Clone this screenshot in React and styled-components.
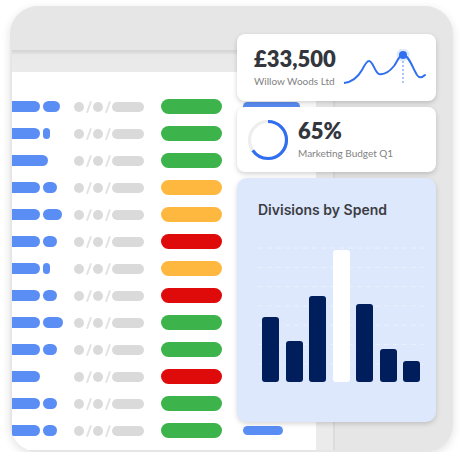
import React from "react";
import styled, { createGlobalStyle } from "styled-components";

const GlobalStyle = createGlobalStyle`
  html, body { margin: 0; padding: 0; background: #ffffff; }
  body { font-family: Lato, "Open Sans", sans-serif; }
`;

const rows = [
  { lead: 38, name: 17, status: "green" },
  { lead: 38, name: 7, status: "green" },
  { lead: 46, name: 0, status: "green" },
  { lead: 38, name: 14, status: "orange" },
  { lead: 38, name: 19, status: "orange" },
  { lead: 38, name: 14, status: "red" },
  { lead: 38, name: 7, status: "orange" },
  { lead: 38, name: 14, status: "red" },
  { lead: 38, name: 20, status: "green" },
  { lead: 38, name: 14, status: "green" },
  { lead: 38, name: 0, status: "red" },
  { lead: 38, name: 14, status: "green" },
  { lead: 38, name: 14, status: "green", tail: 40 },
];

const statusColors = {
  green: "#3cb44b",
  orange: "#ffb83f",
  red: "#df0a0a",
};

const bars = [65, 41, 86, 132, 78, 33, 21];

export default function App() {
  return (
    <>
      <GlobalStyle />
      <Frame>
        <Window>
          <WindowHeader />
          <WindowBody>
            <Table>
              {rows.map((r, i) => (
                <Row key={i}>
                  <NameCell>
                    <LeadBar style={{ width: r.lead }} />
                    {r.name > 0 && <NameBar style={{ width: r.name }} />}
                  </NameCell>
                  <DateCell>
                    <Dot />
                    <Slash />
                    <Dot />
                    <Slash />
                    <Year />
                  </DateCell>
                  <StatusCell>
                    <Status $color={statusColors[r.status]} />
                  </StatusCell>
                  <TailBar style={{ width: r.tail || 57 }} />
                </Row>
              ))}
            </Table>
            <Scroller />
          </WindowBody>
        </Window>

        <Cards>
          <Card>
            <CardText>
              <Amount>£33,500</Amount>
              <Label>Willow Woods Ltd</Label>
            </CardText>
            <Spark width="84" height="40" viewBox="0 0 84 40">
              <path
                d="M0 34 C8 33 14 28 18 21 C21 15 23 12 25 12 C29 12 31 24 35 25 C41 26 46 22 50 17 C53 13 55 6 59 6 C65 6 69 20 73 26 C76 30 78 28 81 26"
                fill="none"
                stroke="#2f6ff0"
                strokeWidth="2"
                strokeLinecap="round"
              />
              <line x1="59" y1="8" x2="59" y2="36" stroke="#5b8ef5" strokeWidth="1" strokeDasharray="2 2" />
              <circle cx="59" cy="6" r="6.5" fill="#2f6ff0" opacity="0.15" />
              <circle cx="59" cy="6" r="4" fill="#2f6ff0" />
            </Spark>
          </Card>

          <Card>
            <Ring width="42" height="42" viewBox="0 0 42 42">
              <circle cx="21" cy="21" r="18.5" fill="none" stroke="#eeeeee" strokeWidth="3.2" />
              <circle
                cx="21"
                cy="21"
                r="18.5"
                fill="none"
                stroke="#2f6ff0"
                strokeWidth="3.2"
                strokeDasharray={`${0.65 * 2 * Math.PI * 18.5} 200`}
                transform="rotate(-90 21 21)"
              />
            </Ring>
            <CardText>
              <Amount>65%</Amount>
              <Label>Marketing Budget Q1</Label>
            </CardText>
          </Card>

          <ChartCard>
            <ChartTitle>Divisions by Spend</ChartTitle>
            <Chart>
              <GridLines width="166" height="140" viewBox="0 0 166 140">
                {[0, 1, 2, 3, 4, 5, 6].map((i) => (
                  <line
                    key={i}
                    x1="0"
                    x2="166"
                    y1={4 + i * 19.3}
                    y2={4 + i * 19.3}
                    stroke="#e9f0fd"
                    strokeWidth="1"
                    strokeDasharray="5 4"
                  />
                ))}
              </GridLines>
              {bars.map((h, i) => (
                <Bar key={i} $light={i === 3} style={{ height: h }} />
              ))}
            </Chart>
          </ChartCard>
        </Cards>
      </Frame>
    </>
  );
}

const Frame = styled.div`
  position: relative;
  margin: 6px 0 0 10px;
  width: 443px;
  height: 446px;
  border-radius: 28px;
  background: #e6e6e6;
  overflow: hidden;
  box-shadow: 0 3px 10px rgba(0, 0, 0, 0.12);
`;

const Window = styled.div`
  margin: 44px 0 0 2px;
  width: 323px;
  display: flex;
  flex-direction: column;
`;

const WindowHeader = styled.div`
  height: 22px;
  background: linear-gradient(#d3d3d3 0, #dedede 3px, #e9e9e9 5px, #ebebeb 100%);
`;

const WindowBody = styled.div`
  display: flex;
  height: 378px;
`;

const Table = styled.div`
  flex: 1;
  background: #ffffff;
  overflow: hidden;
  padding-top: 21px;
`;

const Scroller = styled.div`
  width: 17px;
  background: #ebebeb;
  border-right: 2px solid #dcdcdc;
`;

const Row = styled.div`
  height: 27px;
  display: grid;
  grid-template-columns: 62px 87px 82px 1fr;
  align-items: center;
`;

const NameCell = styled.div`
  display: flex;
  align-items: center;
  gap: 3px;
  margin-left: -10px;
`;

const LeadBar = styled.div`
  height: 11px;
  border-radius: 6px;
  background: #5b8ef5;
`;

const NameBar = styled(LeadBar)``;

const DateCell = styled.div`
  display: flex;
  align-items: center;
`;

const Dot = styled.div`
  width: 10px;
  height: 10px;
  border-radius: 50%;
  background: #dadada;
`;

const Slash = styled.div`
  width: 9px;
  height: 12px;
  position: relative;
  &::after {
    content: "";
    position: absolute;
    left: 4px;
    top: 0;
    width: 1.5px;
    height: 12px;
    background: #e2e2e2;
    transform: rotate(20deg);
  }
`;

const Year = styled.div`
  width: 32px;
  height: 10px;
  border-radius: 5px;
  background: #dadada;
`;

const StatusCell = styled.div`
  display: flex;
  align-items: center;
`;

const Status = styled.div`
  width: 61px;
  height: 15px;
  border-radius: 8px;
  background: ${(p) => p.$color};
`;

const TailBar = styled.div`
  height: 9px;
  border-radius: 5px;
  background: #5b8ef5;
`;

const Cards = styled.div`
  position: absolute;
  left: 227px;
  top: 28px;
  width: 199px;
  display: flex;
  flex-direction: column;
  gap: 6px;
`;

const Card = styled.div`
  height: 67px;
  box-sizing: border-box;
  background: #ffffff;
  border-radius: 8px;
  box-shadow: 0 2px 5px rgba(0, 0, 0, 0.18);
  display: flex;
  align-items: center;
  padding-left: 17px;
  &:nth-child(2) {
    height: 65px;
    padding-left: 10px;
    gap: 9px;
  }
`;

const CardText = styled.div`
  display: flex;
  flex-direction: column;
  flex: 1;
`;

const Amount = styled.div`
  font-family: Lato, sans-serif;
  font-weight: 800;
  font-size: 22px;
  line-height: 24px;
  color: #33363d;
`;

const Label = styled.div`
  font-family: Lato, sans-serif;
  font-size: 10px;
  line-height: 15px;
  color: #828282;
  margin-top: 3px;
`;

const Spark = styled.svg`
  margin-right: 8px;
  margin-top: 2px;
`;

const Ring = styled.svg`
  flex: none;
`;

const ChartCard = styled.div`
  height: 244px;
  box-sizing: border-box;
  background: #dee8fc;
  border-radius: 10px;
  box-shadow: 0 2px 5px rgba(0, 0, 0, 0.16);
  padding: 22px 0 0 21px;
  display: flex;
  flex-direction: column;
`;

const ChartTitle = styled.div`
  font-family: Inter, "Open Sans", sans-serif;
  font-weight: 600;
  font-size: 14px;
  line-height: 20px;
  color: #3b3d42;
`;

const Chart = styled.div`
  position: relative;
  margin: 28px 0 0 4px;
  height: 134px;
  display: flex;
  align-items: flex-end;
  gap: 6.5px;
`;

const GridLines = styled.svg`
  position: absolute;
  left: -4px;
  top: -4px;
`;

const Bar = styled.div`
  position: relative;
  width: 17px;
  border-radius: 3px;
  background: ${(p) => (p.$light ? "#ffffff" : "#001e5c")};
`;
